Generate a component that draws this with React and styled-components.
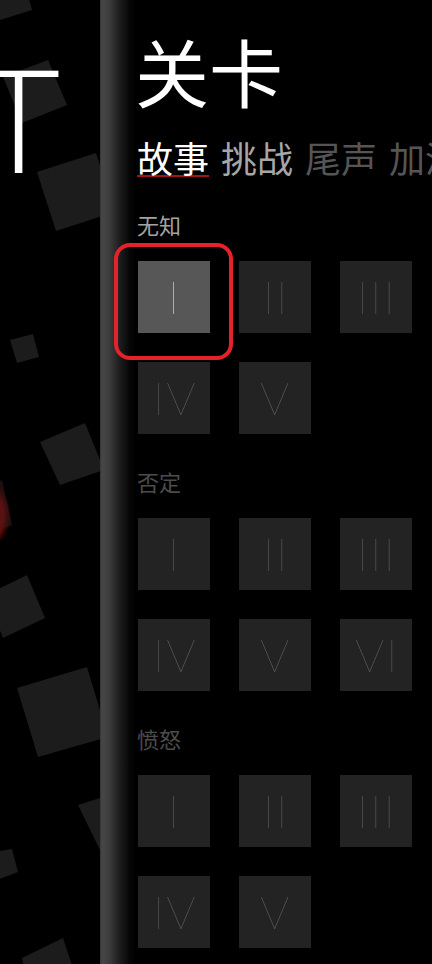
import React from "react";
import styled, { createGlobalStyle } from "styled-components";

const GlobalStyle = createGlobalStyle`
  html, body { margin: 0; padding: 0; background: #000; }
  body { font-family: "Noto Sans CJK SC", "Noto Sans", sans-serif; }
`;

const Screen = styled.div`
  width: 432px;
  height: 964px;
  display: flex;
  overflow: hidden;
  background: #000;
`;

const Backdrop = styled.svg`
  flex: none;
  width: 100px;
  height: 964px;
  display: block;
`;

const Panel = styled.main`
  flex: 1;
  min-width: 0;
  overflow: hidden;
  padding: 33px 0 0 38px;
  background: linear-gradient(
    90deg,
    #353535 0px,
    #474747 2px,
    #3a3a3a 10px,
    #1c1c1c 20px,
    #060606 30px,
    #000 36px
  );
`;

const Title = styled.h1`
  margin: 0 0 0 -3px;
  font-size: 74px;
  line-height: 1;
  font-weight: 400;
  color: #fff;
  white-space: nowrap;
`;

const Tabs = styled.nav`
  display: flex;
  gap: 12px;
  margin-top: 32px;
  margin-left: -1px;
  white-space: nowrap;
`;

const tabColors = { active: "#ffffff", near: "#a6a6a6", far: "#555555" };

const Tab = styled.span`
  flex: none;
  font-size: 36px;
  line-height: 1;
  color: ${(p) => tabColors[p.$tone]};
  border-bottom: 2px solid
    ${(p) => (p.$tone === "active" ? "#a01616" : "transparent")};
`;

const Section = styled.section`
  padding-top: 36px;
`;

const Label = styled.h2`
  margin: 0 0 26px -1px;
  font-size: 22px;
  line-height: 1;
  font-weight: 400;
  color: ${(p) => (p.$bright ? "#a3a3a3" : "#4c4c4c")};
`;

const Grid = styled.div`
  display: grid;
  grid-template-columns: repeat(3, 72px);
  grid-auto-rows: 72px;
  column-gap: 29px;
  row-gap: 29px;
`;

const Tile = styled.div`
  position: relative;
  display: flex;
  align-items: center;
  justify-content: center;
  background: ${(p) => (p.$selected ? "#575757" : "#232323")};
`;

const Numeral = styled.span`
  font-family: "Lato", "Noto Sans", sans-serif;
  font-weight: 200;
  font-size: 46px;
  line-height: 1;
  letter-spacing: 2px;
  margin-right: -2px;
  will-change: transform;
  color: ${(p) => (p.$selected ? "#e6e6e6" : "#666666")};
`;

const SelectRing = styled.div`
  position: absolute;
  top: -18px;
  left: -24px;
  right: -23px;
  bottom: -27px;
  border: 4px solid #e3222b;
  border-radius: 16px;
  pointer-events: none;
`;

const sections = [
  { name: "无知", bright: true, levels: ["I", "II", "III", "IV", "V"], selected: 0 },
  { name: "否定", levels: ["I", "II", "III", "IV", "V", "VI"] },
  { name: "愤怒", levels: ["I", "II", "III", "IV", "V"] },
];

const tabs = [
  { label: "故事", tone: "active" },
  { label: "挑战", tone: "near" },
  { label: "尾声", tone: "far" },
  { label: "加演", tone: "far" },
];

const squares = [
  "-10,-15 22,-25 32,10 0,20",
  "3,77 48,60 67,105 22,123",
  "37,172 96,153 115,212 56,231",
  "10,340 33,334 39,357 17,363",
  "40,442 85,423 104,470 60,485",
  "-14,595 27,575 45,618 3,638",
  "17,688 87,667 108,737 38,757",
  "78,805 125,790 147,835 100,850",
  "-6,852 12,849 18,872 -3,880",
  "22,958 63,938 80,990 30,1000",
];

function SideArt() {
  return (
    <Backdrop viewBox="0 0 100 964" aria-hidden="true">
      <defs>
        <radialGradient id="redGlow" cx="0.5" cy="0.5" r="0.5">
          <stop offset="0" stopColor="#4a0000" />
          <stop offset="0.78" stopColor="#820808" />
          <stop offset="1" stopColor="#6a0606" stopOpacity="0" />
        </radialGradient>
      </defs>
      <rect width="100" height="964" fill="#000" />
      {squares.map((pts) => (
        <polygon key={pts} points={pts} fill="#1c1c1c" />
      ))}
      <ellipse cx="-24" cy="515" rx="35" ry="39" fill="url(#redGlow)" />
      <polygon points="-30,494 2,480 12,525 -20,540" fill="#3a1a1a" opacity="0.55" />
      <text
        x="18.5"
        y="173"
        textAnchor="middle"
        fill="#fff"
        fontFamily="Lato, sans-serif"
        fontWeight="300"
        fontSize="145"
      >
        T
      </text>
    </Backdrop>
  );
}

export default function App() {
  return (
    <>
      <GlobalStyle />
      <Screen>
        <SideArt />
        <Panel>
          <Title>关卡</Title>
          <Tabs>
            {tabs.map((t) => (
              <Tab key={t.label} $tone={t.tone}>
                {t.label}
              </Tab>
            ))}
          </Tabs>
          {sections.map((s) => (
            <Section key={s.name}>
              <Label $bright={s.bright}>{s.name}</Label>
              <Grid>
                {s.levels.map((lv, i) => {
                  const sel = s.selected === i;
                  return (
                    <Tile key={lv} $selected={sel}>
                      <Numeral $selected={sel}>{lv}</Numeral>
                      {sel && <SelectRing />}
                    </Tile>
                  );
                })}
              </Grid>
            </Section>
          ))}
        </Panel>
      </Screen>
    </>
  );
}
